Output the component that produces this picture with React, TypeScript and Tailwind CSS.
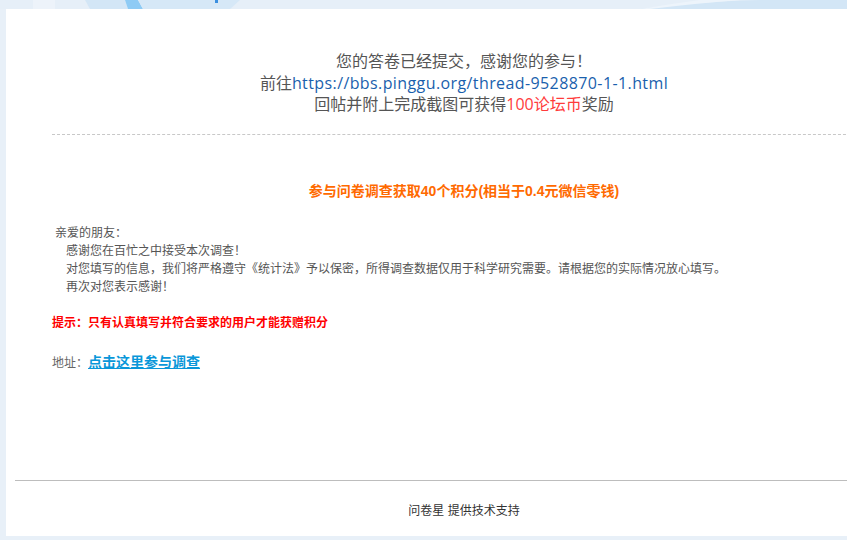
import React from "react";

const cjk = { fontFamily: '"Liberation Sans", "Noto Sans CJK SC", sans-serif' };
const wide = { fontFamily: '"Open Sans", "Noto Sans CJK SC", sans-serif' };

export default function App() {
  return (
    <div
      className="w-[847px] h-[540px] overflow-hidden bg-[#e8f0f8] flex flex-col"
      style={cjk}
    >
      <svg className="block shrink-0" width="847" height="9" viewBox="0 0 847 9">
        <rect width="847" height="9" fill="#e6eff8" />
        <rect x="33" y="0" width="22" height="9" fill="#edf3fa" />
        <path d="M85 0 L125 0 L128 9 L90 9 Z" fill="#d3e6f6" />
        <path d="M125 0 L138 0 L143 9 L128 9 Z" fill="#8ecbf5" />
        <path d="M138 0 L240 0 L230 9 L143 9 Z" fill="#d6e8f7" />
        <rect x="215" y="0" width="3" height="3" fill="#3a8fe0" />
        <path d="M640 9 Q690 2 760 0 L847 0 L847 9 Z" fill="#d3e6f6" />
        <path d="M650 9 Q700 3 740 0 L700 0 Q670 4 640 9 Z" fill="#edf4fb" />
      </svg>
      <div className="ml-[6px] w-[916px] h-[527px] shrink-0 bg-white flex flex-col">
        <div className="pt-[42px] text-center text-[16px] leading-[21.5px] text-[#555]" style={wide}>
          <div>您的答卷已经提交，感谢您的参与！</div>
          <div>
            前往
            <span className="text-[#1a5fad] tracking-[0.4px]">https://bbs.pinggu.org/thread-9528870-1-1.html</span>
          </div>
          <div>
            回帖并附上完成截图可获得<span className="text-[#ff3b3b]">100论坛币</span>奖励
          </div>
        </div>
        <div className="mt-[18px] mx-[46px] border-t border-dashed border-[#c8c8c8]" />
        <div className="mt-[46px] text-center text-[14px] leading-[20px] font-bold text-[#ff6a00]">
          参与问卷调查获取40个积分(相当于0.4元微信零钱)
        </div>
        <div className="mt-[23px] pl-[49px] text-[12px] leading-[18px] text-[#555]">
          <div>亲爱的朋友：</div>
          <div className="pl-[11px]">感谢您在百忙之中接受本次调查！</div>
          <div className="pl-[11px]">
            对您填写的信息，我们将严格遵守《统计法》予以保密，所得调查数据仅用于科学研究需要。请根据您的实际情况放心填写。
          </div>
          <div className="pl-[11px]">再次对您表示感谢！</div>
        </div>
        <div className="mt-[18px] pl-[46px] text-[12px] leading-[18px] font-bold text-[#ff0000]">
          提示：只有认真填写并符合要求的用户才能获赠积分
        </div>
        <div className="mt-[20px] pl-[46px] text-[12px] leading-[20px] text-[#666]">
          地址：
          <a className="text-[14px] font-bold text-[#0a97d9] underline">点击这里参与调查</a>
        </div>
        <div className="mt-[107px] ml-[9px] border-t border-[#bdbdbd]" />
        <div className="mt-[21px] text-center text-[12px] leading-[18px] text-[#333]">
          问卷星 提供技术支持
        </div>
      </div>
    </div>
  );
}
